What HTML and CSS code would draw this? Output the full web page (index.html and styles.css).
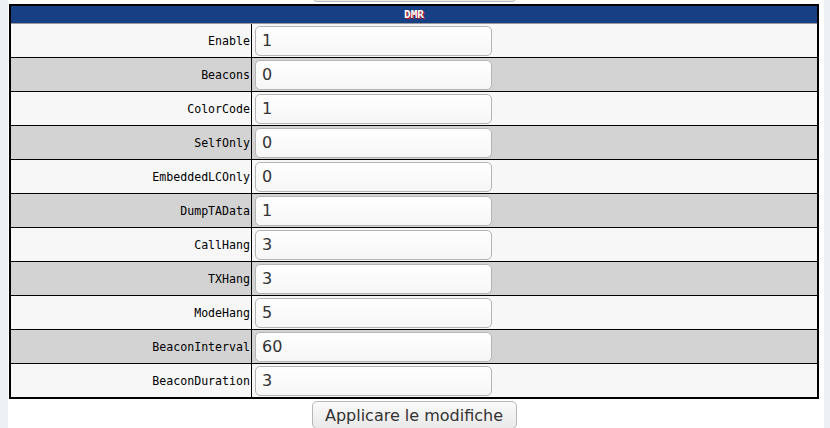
FILE: index.html
```html
<!DOCTYPE html>
<html>
<head>
<meta charset="utf-8">
<link rel="stylesheet" href="styles.css">
</head>
<body>
<div class="page">
  <div class="btnrow btnrow-top"><button class="apply">Applicare le modifiche</button></div>
  <table class="cfg">
    <tr><th colspan="2" class="head">DMR</th></tr>
    <tr class="odd"><td class="lbl">Enable</td><td class="val"><input type="text" value="1"></td></tr>
    <tr class="even"><td class="lbl">Beacons</td><td class="val"><input type="text" value="0"></td></tr>
    <tr class="odd"><td class="lbl">ColorCode</td><td class="val"><input type="text" value="1"></td></tr>
    <tr class="even"><td class="lbl">SelfOnly</td><td class="val"><input type="text" value="0"></td></tr>
    <tr class="odd"><td class="lbl">EmbeddedLCOnly</td><td class="val"><input type="text" value="0"></td></tr>
    <tr class="even"><td class="lbl">DumpTAData</td><td class="val"><input type="text" value="1"></td></tr>
    <tr class="odd"><td class="lbl">CallHang</td><td class="val"><input type="text" value="3"></td></tr>
    <tr class="even"><td class="lbl">TXHang</td><td class="val"><input type="text" value="3"></td></tr>
    <tr class="odd"><td class="lbl">ModeHang</td><td class="val"><input type="text" value="5"></td></tr>
    <tr class="even"><td class="lbl">BeaconInterval</td><td class="val"><input type="text" value="60"></td></tr>
    <tr class="odd"><td class="lbl">BeaconDuration</td><td class="val"><input type="text" value="3"></td></tr>
  </table>
  <div class="btnrow"><button class="apply">Applicare le modifiche</button></div>
</div>
</body>
</html>
```
FILE: styles.css
```css
html, body {
  margin: 0;
  padding: 0;
  background: #edf0f5;
  height: 428px;
  overflow: hidden;
}
.page {
  width: 816px;
  margin-left: 8px;
  background: #ffffff;
  height: 428px;
  overflow: hidden;
}
.btnrow {
  display: flex;
  justify-content: center;
  width: 812px;
  margin-top: 2px;
}
.btnrow-top {
  margin-top: -26px;
}
.apply {
  font-family: "DejaVu Sans", sans-serif;
  font-size: 16px;
  color: #333;
  height: 28px;
  width: 205px;
  padding: 0;
  border: 1px solid #b8b8b8;
  border-radius: 5px;
  background: linear-gradient(#fafafa, #e9e9e9);
  margin-left: 0;
}
.cfg {
  margin-top: 2px;
  margin-left: 1px;
  width: 810px;
  border: 2px solid #000;
  border-collapse: collapse;
  font-family: "DejaVu Sans Mono", monospace;
}
.head {
  background: #163f84;
  color: #fff;
  font-size: 11px;
  font-weight: bold;
  height: 17px;
  padding: 0;
  text-shadow: 1px 1px 0 #c0141e;
  border-bottom: 1px solid #999;
}
.cfg td {
  padding: 0;
  height: 33px;
  border-bottom: 1px solid #000;
}
.odd td { background: #f7f7f7; }
.even td { background: #d3d3d3; }
.lbl {
  width: 239px;
  text-align: right;
  font-size: 11.6px;
  color: #000;
  padding-right: 1px !important;
  border-right: 1px solid #000;
  vertical-align: middle;
}
.val input {
  display: block;
  box-sizing: border-box;
  margin-left: 3px;
  width: 237px;
  height: 30px;
  border: 1px solid #b4b4b4;
  border-radius: 5px;
  background: linear-gradient(#ffffff, #f6f6f6);
  font-family: "DejaVu Sans", sans-serif;
  font-size: 16px;
  color: #333;
  padding: 0 6px;
}
```
